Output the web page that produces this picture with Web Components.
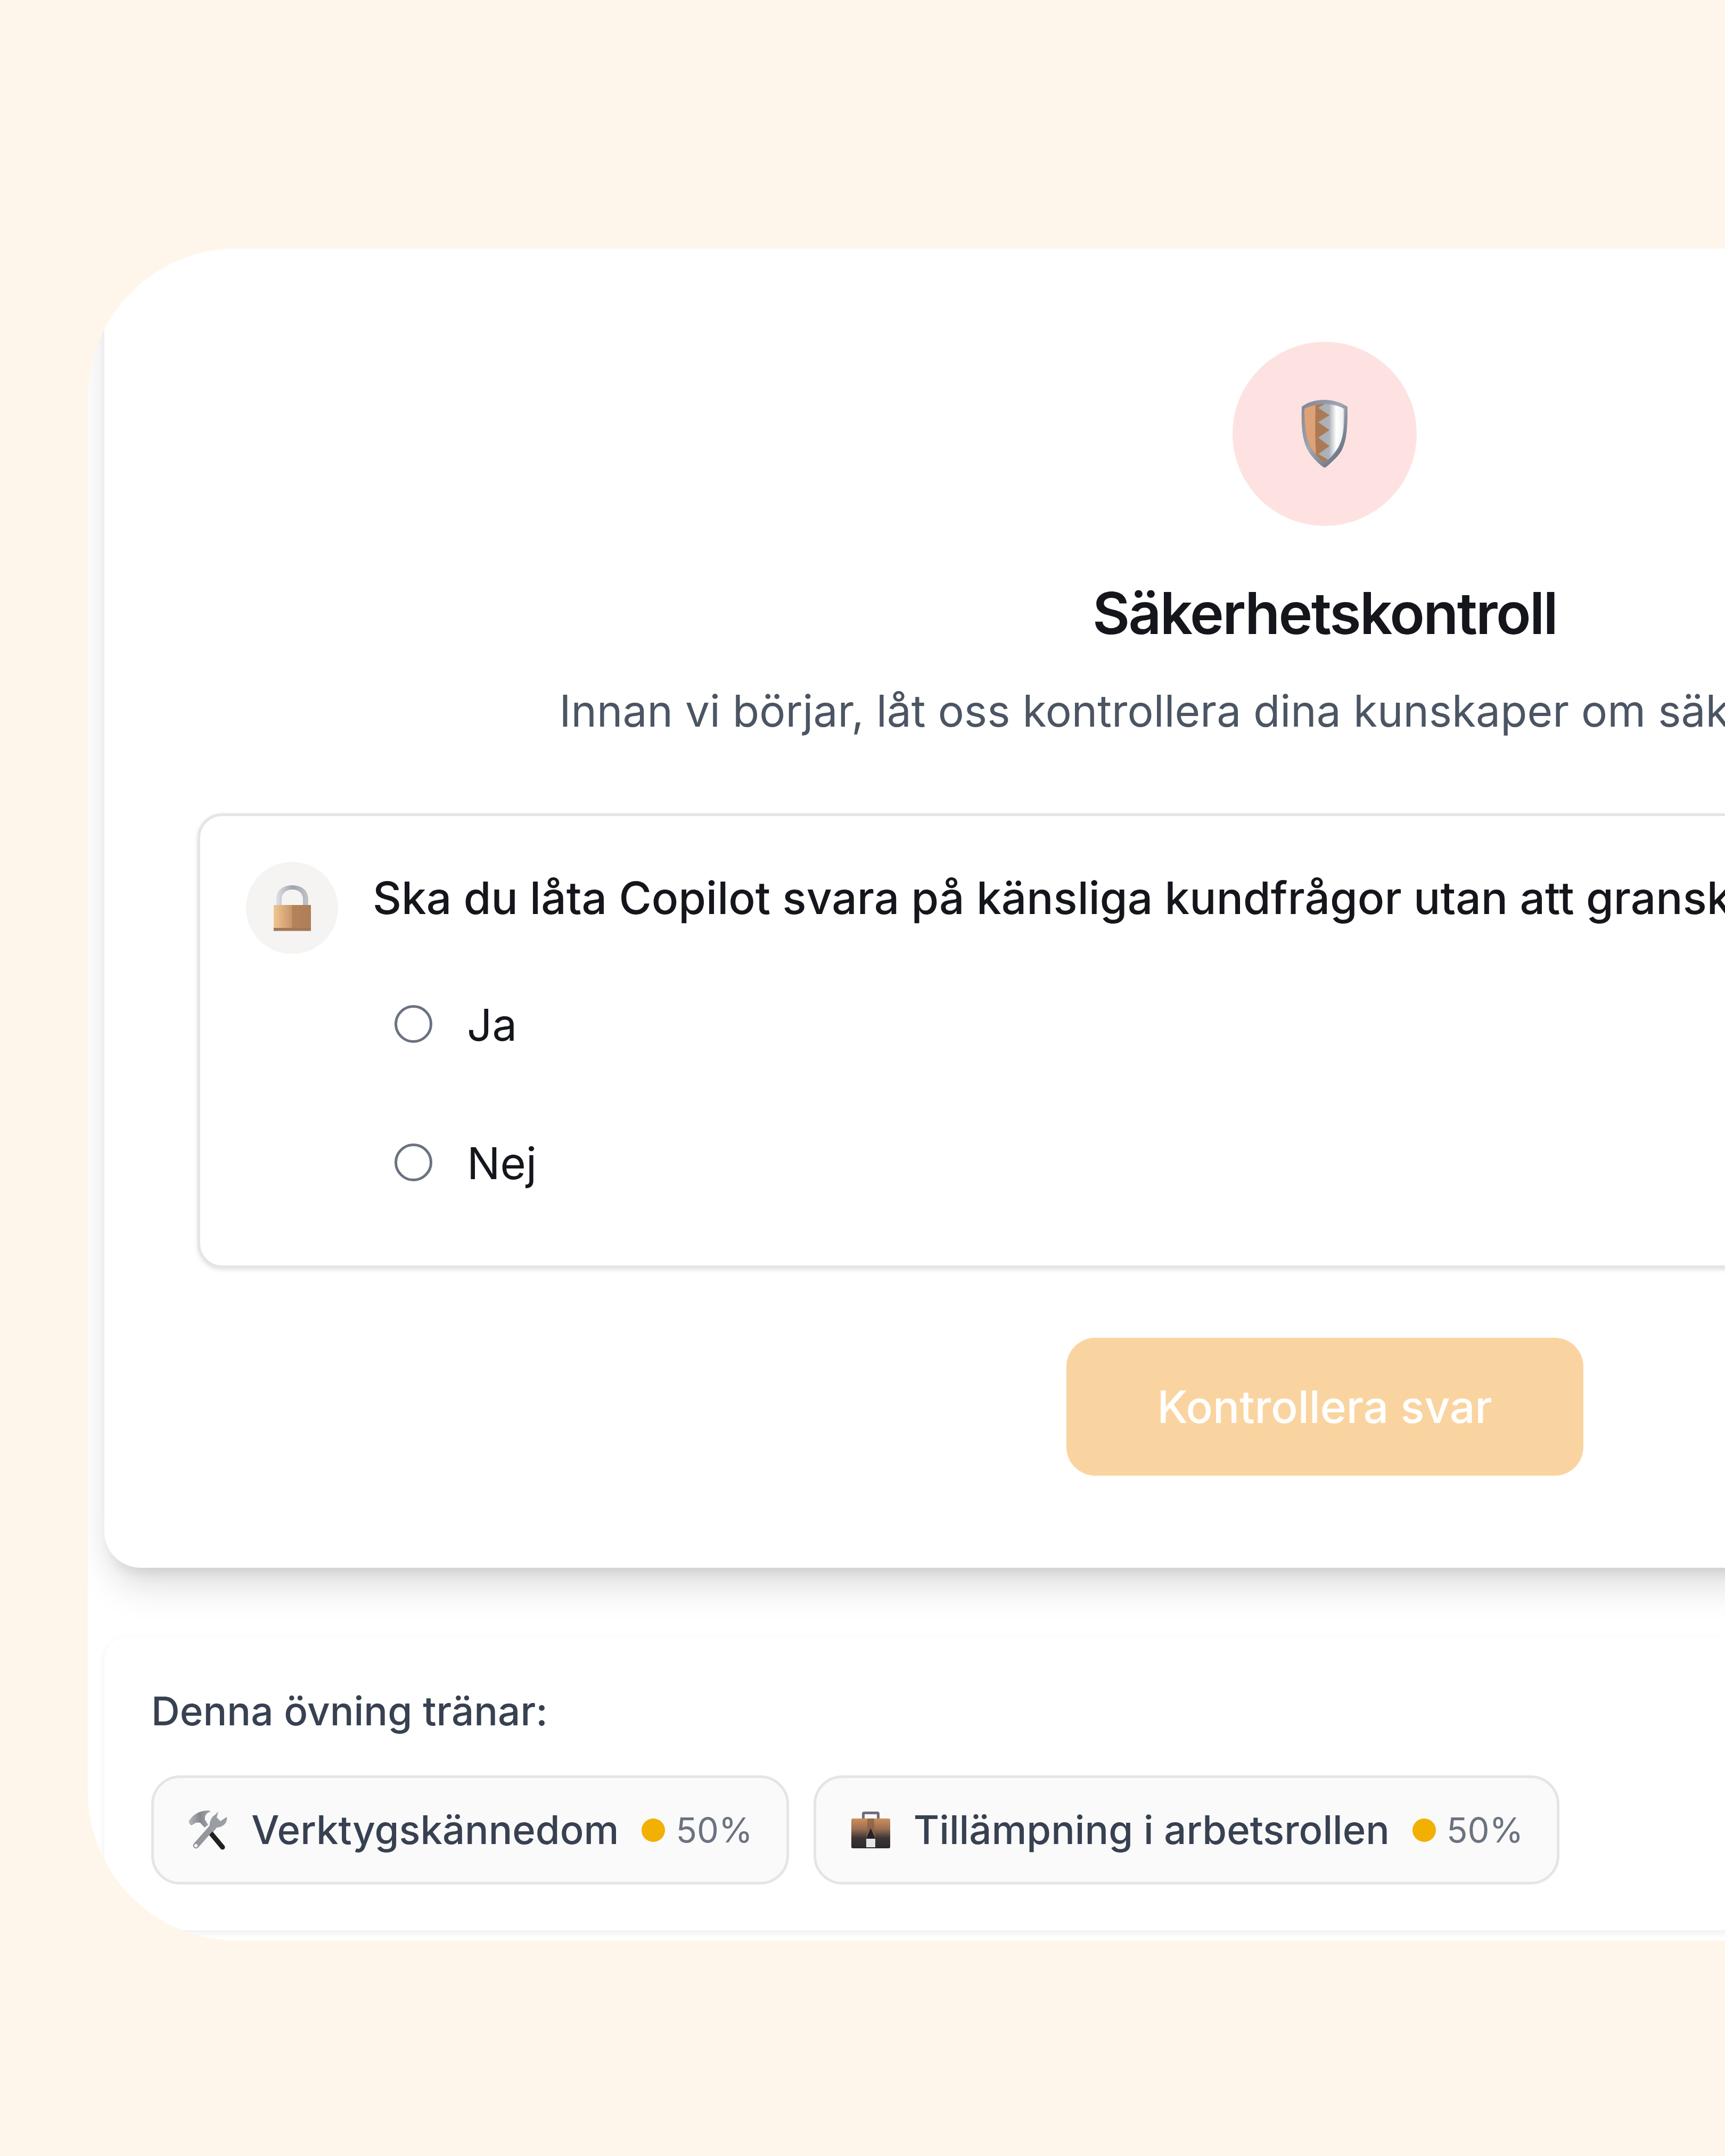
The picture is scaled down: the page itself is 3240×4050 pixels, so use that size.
<!doctype html>
<html lang="sv"><head><meta charset="utf-8"><title>Säkerhetskontroll</title>
<style>
html,body{margin:0;padding:0;background:#fff6eb;overflow:hidden;width:3240px;height:4050px}
body{font-family:Inter,"Liberation Sans",sans-serif;color:#14161c}
</style></head><body>
<quiz-stage>
  <quiz-card>
    <emoji-shield slot="icon"></emoji-shield>
    <span slot="title">Säkerhetskontroll</span>
    <span slot="lead">Innan vi börjar, låt oss kontrollera dina kunskaper om säker AI-användning</span>
    <quiz-question slot="q">
      <emoji-lock slot="icon"></emoji-lock>
      <span slot="text">Ska du låta Copilot svara på känsliga kundfrågor utan att granska svaren först?</span>
      <quiz-option>Ja</quiz-option>
      <quiz-option>Nej</quiz-option>
    </quiz-question>
    <span slot="cta">Kontrollera svar</span>
  </quiz-card>
  <skills-card>
    <skill-chip><emoji-tools slot="icon"></emoji-tools>Verktygskännedom</skill-chip>
    <skill-chip><emoji-case slot="icon"></emoji-case>Tillämpning i arbetsrollen</skill-chip>
  </skills-card>
</quiz-stage>
<script>
function def(name,html,init){customElements.define(name,class extends HTMLElement{constructor(){super();const r=this.attachShadow({mode:'open'});r.innerHTML=html;if(init)init(this,r)}})}
def('quiz-stage',`<style>:host{display:block;padding:467px 0 0 165px;box-sizing:border-box}
.clip{width:4646px;height:3178px;border-radius:280px;background:#fff;overflow:hidden;padding:0 31px;box-sizing:border-box;display:flex;flex-direction:column;gap:129px}</style><div class="clip"><slot></slot></div>`);
def('quiz-card',`<style>:host{display:flex;flex-direction:column;align-items:center;width:4584px;height:2478px;box-sizing:border-box;background:#fff;border-radius:68px;box-shadow:0 54px 68px -14px rgba(0,0,0,.10),0 22px 27px -16px rgba(0,0,0,.10),0 0 70px rgba(0,0,0,.06);padding:175px 175px 0;flex:none}
.c{width:346px;height:346px;border-radius:50%;background:#fee2e2;display:flex;align-items:center;justify-content:center}
h1{margin:110px 0 0;font:600 108px/1 Inter,sans-serif;letter-spacing:-2.7px;color:#14161c;height:108px;line-height:108px}
p{margin:78px 0 0;padding-right:10px;font:400 82px/1 Inter,sans-serif;color:#4b5563;white-space:nowrap;height:104px;line-height:104px}
.q{align-self:stretch;margin-top:140px}
.b{margin-top:131px;width:971px;height:259px;border-radius:54px;background:#fad4a0;color:#fff;font:500 83.5px/259px Inter,sans-serif;text-align:center}</style>
<div class="c"><slot name="icon"></slot></div><h1><slot name="title"></slot></h1><p><slot name="lead"></slot></p><div class="q"><slot name="q"></slot></div><div class="b"><slot name="cta"></slot></div>`);
def('quiz-question',`<style>:host{display:block;box-sizing:border-box;height:854px;border:5px solid #e5e5e3;border-radius:46px;background:#fff;box-shadow:0 3px 8px rgba(0,0,0,.12);padding:86px 86px 0}
.h{display:flex;gap:65px}.i{width:173px;height:173px;border-radius:50%;background:#f5f4f2;display:flex;align-items:center;justify-content:center;flex:none}
.t{font:500 83.7px/130px Inter,sans-serif;color:#14161c;white-space:nowrap;margin-top:3px}
.o{margin:0 0 0 279px;display:flex;flex-direction:column;gap:130px;padding-top:68px}</style>
<div class="h"><div class="i"><slot name="icon"></slot></div><div class="t"><slot name="text"></slot></div></div><div class="o"><slot></slot></div>`);
def('quiz-option',`<style>:host{display:flex;align-items:center;gap:65px;height:130px;font:400 83px/130px Inter,sans-serif;color:#14161c}
i{width:71px;height:71px;box-sizing:border-box;border:5.5px solid #6b7280;border-radius:50%;flex:none;background:#fff;margin-top:-3px}</style><i></i><slot></slot>`);
def('skills-card',`<style>:host{display:block;width:4584px;height:552px;box-sizing:border-box;border-radius:46px;background:#fff;box-shadow:0 5px 14px rgba(0,0,0,.07);padding:86px 88px 0;flex:none}
.l{font:500 74.5px/108px Inter,sans-serif;color:#374151;height:108px;margin-bottom:67px}
.r{display:flex;gap:46px}</style><div class="l">Denna övning tränar:</div><div class="r"><slot></slot></div>`);
def('skill-chip',`<style>:host{display:flex;align-items:center;height:205px;box-sizing:border-box;border:5px solid #e7e5e4;border-radius:54px;background:#fafafa;padding:0 63px 0 65px;font:500 74.2px/1 Inter,sans-serif;color:#374151}
.ic{display:flex;margin-right:43px}.d{width:44px;height:44px;border-radius:50%;background:#f2b003;margin-left:43px;flex:none}.p{margin-left:20px;font-size:65px;font-weight:400;color:#6b7280}</style>
<span class="ic"><slot name="icon"></slot></span><slot></slot><span class="d"></span><span class="p">50%</span>`);
def('emoji-shield',`<style>:host{display:block;width:90px;height:130px}svg{display:block}</style>
<svg width="90" height="130" viewBox="0 0 90 130"><defs>
<linearGradient id="r" x1="0" x2="1" y1="0" y2="0"><stop offset="0" stop-color="#a3a8b1"/><stop offset=".62" stop-color="#aeb2b9"/><stop offset=".8" stop-color="#fff"/><stop offset=".95" stop-color="#f2f3f4"/><stop offset="1" stop-color="#c5c9cf"/></linearGradient>
<linearGradient id="e" x1="0" x2="1" y1="0" y2="1"><stop offset="0" stop-color="#7f8794"/><stop offset=".45" stop-color="#a0a6b0"/><stop offset="1" stop-color="#556074"/></linearGradient></defs>
<path d="M45 1C28 1 12 6 2 14C1 50 2 78 16 100C24 112 35 122 43 128H47C56 120 68 110 76 98C88 76 88 45 88 14C76 6 60 1 45 1Z" fill="url(#e)"/>
<path d="M45 9C30 9 17 12 7 18C7 52 10 76 22 95C29 106 37 113 45 119C53 113 62 104 69 93C81 74 82 48 82 18C71 12 59 9 45 9Z" fill="url(#r)"/>
<path d="M45 9C30 9 17 12 7 18C7 52 10 76 22 95C29 106 37 113 45 119L51 113L33 103L54 88L33 72L54 58L33 43L54 30L33 16L45 9Z" fill="#ab7a54"/>
<path d="M28 11C18 13 12 15 7 18C7 52 10 76 22 95L29 104C27 80 27 40 28 11Z" fill="#dfa278"/></svg>`);
def('emoji-lock',`<style>:host{display:block;width:70px;height:86px}svg{display:block}</style>
<svg width="70" height="86" viewBox="0 0 70 86"><defs>
<linearGradient id="b" x1="0" x2="1" y1="0" y2="0"><stop offset="0" stop-color="#f1c690"/><stop offset=".48" stop-color="#c9966c"/><stop offset=".5" stop-color="#b5835a"/><stop offset="1" stop-color="#ad7e58"/></linearGradient>
<linearGradient id="s" x1="0" x2="1" y1="0" y2="0"><stop offset="0" stop-color="#dfe1e6"/><stop offset=".5" stop-color="#9fa3ac"/><stop offset="1" stop-color="#bfc3ca"/></linearGradient></defs>
<path d="M5 38V26C5 9 18 0 35 0S65 9 65 26V38H55V26C55 15 47 8 35 8S15 15 15 26V38Z" fill="url(#s)"/>
<rect x="0" y="37" width="70" height="49" fill="url(#b)"/><rect x="0" y="80" width="70" height="5" fill="#a87650"/><rect x="0" y="85" width="70" height="1" fill="#9a9fa8"/></svg>`);
def('emoji-tools',`<style>:host{display:block;width:75px;height:75px}svg{display:block}</style>
<svg width="75" height="75" viewBox="0 0 75 75"><defs><linearGradient id="h" x1="0" y1="0" x2="1" y2="0"><stop offset="0" stop-color="#b5b7bc"/><stop offset=".5" stop-color="#85888f"/><stop offset="1" stop-color="#a2a5ab"/></linearGradient></defs>
<path d="M39 40L64 70" stroke="#1f2023" stroke-width="9" stroke-linecap="round"/>
<path d="M14 67L44 33" stroke="#94979e" stroke-width="11" stroke-linecap="round"/>
<circle cx="14" cy="67" r="3" fill="#fff"/>
<path d="M1 20C8 10 20 0 38 1L42 3C34 5 30 10 31 18L37 28L30 33L22 24C15 22 10 26 6 29C3 28 0 24 1 20Z" fill="url(#h)"/>
<path d="M42 38C37 28 41 14 50 9L56 3L53 14L60 21L72 13C74 24 64 33 53 33L46 42Z" fill="#9a9da4"/></svg>`);
def('emoji-case',`<style>:host{display:block;width:75px;height:72px}svg{display:block}</style>
<svg width="75" height="72" viewBox="0 0 75 72"><defs><linearGradient id="k" x1="0" y1="0" x2="0" y2="1"><stop offset="0" stop-color="#cd8f5c"/><stop offset=".35" stop-color="#9a6f52"/><stop offset=".65" stop-color="#3f3635"/><stop offset="1" stop-color="#2b292b"/></linearGradient></defs>
<path d="M21 15V5C21 2 23 1 25 1H50C52 1 54 2 54 5V15H49V6H26V15Z" fill="#6d6f78"/>
<rect x="1" y="14" width="73" height="56" rx="3" fill="url(#k)"/>
<path d="M31 14H44V26L46 52H29L31 26Z" fill="#8a5f44" opacity=".75"/><path d="M37.500 32L46 52H29Z" fill="#25232a"/>
<rect x="29" y="52" width="17" height="16" fill="#e6e6e6"/></svg>`);
</script></body></html>
